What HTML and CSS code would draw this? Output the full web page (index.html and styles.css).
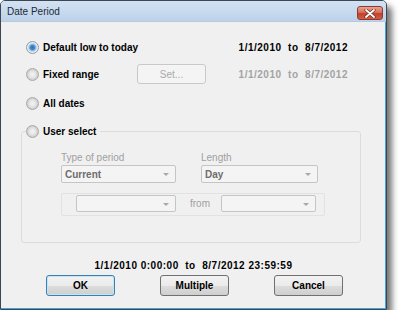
FILE: index.html
```html
<!DOCTYPE html>
<html lang="en">
  <head>
    <meta charset="UTF-8" />
    <meta name="viewport" content="width=device-width, initial-scale=1.0" />
    <link rel="stylesheet" href="styles.css">
  </head>
  <body>
    <div class="window">
      <div class="titlebar">
        <span class="title">Date Period</span>
        <span class="close">
          <svg width="12" height="9" viewBox="0 0 12 9">
            <path d="M2 1 L10 8 M10 1 L2 8" stroke="#6b2a22" stroke-width="3.2" stroke-linecap="round" />
            <path d="M2 1 L10 8 M10 1 L2 8" stroke="#ffffff" stroke-width="1.8" stroke-linecap="round" />
          </svg>
        </span>
      </div>

      <div class="client">
        <div class="row row-first">
          <label class="option"><span class="radio checked"></span>Default low to today</label>
          <span class="range">1/1/2010  to  8/7/2012</span>
        </div>

        <div class="row row-second">
          <label class="option fixed"><span class="radio"></span>Fixed range</label>
          <button class="btn set" disabled>Set...</button>
          <span class="range muted">1/1/2010  to  8/7/2012</span>
        </div>

        <div class="row row-third">
          <label class="option"><span class="radio"></span>All dates</label>
        </div>

        <fieldset class="group">
          <legend class="option"><span class="radio"></span>User select</legend>
          <div class="group-body">
            <div class="fields">
              <div class="field">
                <span class="field-label">Type of period</span>
                <div class="combo period">Current<span class="arrow"></span></div>
              </div>
              <div class="field">
                <span class="field-label">Length</span>
                <div class="combo length">Day<span class="arrow"></span></div>
              </div>
            </div>
            <div class="span-panel">
              <div class="combo start"><span class="arrow"></span></div>
              <span class="from">from</span>
              <div class="combo end"><span class="arrow"></span></div>
            </div>
          </div>
        </fieldset>

        <div class="summary">1/1/2010 0:00:00  to  8/7/2012 23:59:59</div>

        <div class="actions">
          <button class="btn default">OK</button>
          <button class="btn">Multiple</button>
          <button class="btn">Cancel</button>
        </div>
      </div>
    </div>
  </body>
</html>
```

FILE: styles.css
```css
body {
  margin: 0;
  background-color: #ffffff;
  font-family: "Liberation Sans", Arial, sans-serif;
  font-size: 10px;
}

.window {
  width: 387px;
  height: 310px;
  box-sizing: border-box;
  border: 1px solid #3d4752;
  border-radius: 5px 5px 0 0;
  background-color: #f0f0f0;
  box-shadow: inset -1px -1px 0 #3ea6dc, 5px 6px 6px rgba(0, 0, 0, 0.55);
  overflow: hidden;
}

.titlebar {
  height: 20px;
  display: flex;
  align-items: center;
  justify-content: space-between;
  padding: 0 3px 0 6px;
  background: linear-gradient(#d3e2f2, #bcd2ea);
  border-bottom: 1px solid #b7c9dc;
}

.title {
  font-size: 10px;
  color: #1e2a36;
}

.close {
  width: 26px;
  height: 14px;
  margin-top: 4px;
  display: flex;
  align-items: center;
  justify-content: center;
  border: 1px solid #8a3b30;
  border-radius: 3px;
  box-sizing: border-box;
  background: linear-gradient(#e8a493 0%, #d86f58 45%, #c2402b 55%, #d35d43 100%);
}

.client {
  padding-top: 15px;
  height: 288px;
  box-sizing: border-box;
}

.row {
  display: flex;
  align-items: center;
  height: 20px;
  padding: 0 38px 0 25px;
}

.row-second {
  margin-top: 7px;
}

.row-third {
  margin-top: 9px;
}

.option {
  display: flex;
  align-items: center;
  font-weight: bold;
  color: #000000;
}

.option.fixed {
  width: 111px;
}

.radio {
  width: 11px;
  height: 11px;
  margin-right: 4px;
  border: 1px solid #a9a9a9;
  border-radius: 50%;
  background: radial-gradient(circle at 50% 50%, #f4f4f4 0, #e6e6e6 3px, #cdcdcd 5.5px);
  box-sizing: content-box;
}

.radio.checked {
  border-color: #8e9aa6;
  background: radial-gradient(circle at 50% 50%, #2e6eb0 0, #4d8fd0 2.5px, #a9c8e6 3.5px, #e8eef3 5px);
}

.range {
  margin-left: auto;
  font-weight: bold;
  letter-spacing: 0.5px;
  white-space: pre;
  color: #000000;
}

.range.muted {
  color: #a3a3a3;
}

.btn {
  width: 69px;
  height: 21px;
  padding: 0;
  font-family: "Liberation Sans", Arial, sans-serif;
  font-size: 10px;
  font-weight: bold;
  color: #000000;
  border: 1px solid #707070;
  border-radius: 3px;
  background: linear-gradient(#f2f2f2 0%, #ebebeb 50%, #dddddd 51%, #cfcfcf 100%);
}

.btn.default {
  border-color: #3c7fb1;
  box-shadow: inset 0 0 0 1px #c4e5f6;
}

.btn.set {
  height: 20px;
  font-weight: normal;
  color: #a9a9a9;
  border-color: #c9c9c9;
  background: #f4f4f4;
}

.group {
  margin: 8px 0 0 20px;
  padding: 0;
  width: 340px;
  box-sizing: border-box;
  border: 1px solid #dcdcdc;
  border-radius: 3px;
}

.group legend {
  margin-left: 4px;
  padding: 0 4px 0 0;
  height: 20px;
}

.group-body {
  padding: 10px 0 26px 39px;
}

.fields {
  display: flex;
  gap: 25px;
}

.field {
  display: flex;
  flex-direction: column;
}

.field-label {
  line-height: 13px;
  color: #a0a0a0;
}

.combo {
  position: relative;
  height: 18px;
  margin-top: 1px;
  padding-left: 3px;
  box-sizing: border-box;
  display: flex;
  align-items: center;
  font-weight: bold;
  color: #6d6d6d;
  border: 1px solid #c5c5c5;
  border-radius: 2px;
  background-color: #f4f4f4;
}

.combo.period {
  width: 115px;
}

.combo.length {
  width: 117px;
}

.arrow {
  position: absolute;
  right: 6px;
  top: 7px;
  border-left: 3px solid transparent;
  border-right: 3px solid transparent;
  border-top: 3px solid #a8a8a8;
}

.span-panel {
  margin-top: 10px;
  width: 264px;
  height: 23px;
  box-sizing: border-box;
  padding: 1px 0 0 14px;
  display: flex;
  align-items: flex-start;
  border: 1px solid #e2e2e2;
  border-radius: 2px;
}

.span-panel .combo {
  margin-top: 0;
  height: 17px;
}

.combo.start {
  width: 100px;
}

.combo.end {
  width: 95px;
}

.from {
  margin: 0 11px 0 14px;
  line-height: 17px;
  color: #a0a0a0;
}

.summary {
  margin-top: 16px;
  line-height: 13px;
  text-align: center;
  font-weight: bold;
  letter-spacing: 0.5px;
  white-space: pre;
  color: #000000;
}

.actions {
  display: flex;
  gap: 45px;
  margin-top: 3px;
  padding-left: 45px;
}
```
